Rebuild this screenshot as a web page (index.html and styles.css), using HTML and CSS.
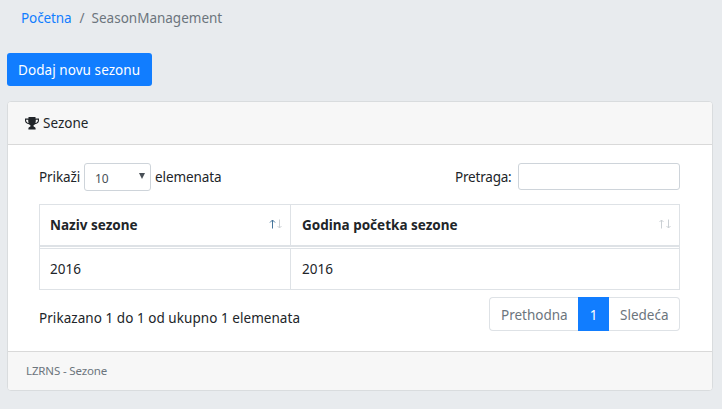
FILE: index.html
```html
<!DOCTYPE html>
<html lang="sr">
<head>
<meta charset="utf-8">
<title>Sezone</title>
<link rel="stylesheet" href="styles.css">
</head>
<body>
<nav class="breadcrumb"><a href="#">Početna</a><span class="slash">/</span><span class="here">SeasonManagement</span></nav>
<button class="add">Dodaj novu sezonu</button>
<section class="card">
  <header class="card-header">
    <svg class="trophy" viewBox="0 0 14 13"><path fill="currentColor" d="M3.500 0h7v1.600H14v2c0 2-1.700 3.500-4 3.700-.6.7-1.600.9-1.600 1.700 0 1 2.200.8 2.200 2.300V12.500H3.400v-1.200c0-1.500 2.200-1.300 2.200-2.300 0-.8-1-1-1.600-1.700C1.700 7.100 0 5.600 0 3.600v-2h3.500zM1.100 2.700v.9c0 1.200 1 2.200 2.500 2.500-.3-.8-.4-2-.4-3.400zM10.800 2.700c0 1.400-.1 2.600-.4 3.400 1.500-.3 2.500-1.300 2.500-2.500v-.9z"/></svg>
    <span>Sezone</span>
  </header>
  <div class="card-body">
    <div class="controls">
      <label class="length"><span class="show">Prikaži</span><span class="select"><span>10</span><i class="caret"></i></span><span class="items">elemenata</span></label>
      <label class="filter"><span>Pretraga:</span><input type="search"></label>
    </div>
    <div class="table">
      <div class="row head">
        <div class="cell"><span>Naziv sezone</span>
          <svg class="sort" viewBox="0 0 13 10"><path class="on" d="M3.500 9.500V1M1 3.500L3.500 1 6 3.500"/><path class="off" d="M10.500 .5V9M8.500 7l2 2 2-2"/></svg></div>
        <div class="cell"><span>Godina početka sezone</span>
          <svg class="sort" viewBox="0 0 13 10"><path class="off" d="M3.500 9.500V1M1.500 3L3.500 1l2 2M10.500 .5V9M8.500 7l2 2 2-2"/></svg></div>
      </div>
      <div class="row data"><div class="cell">2016</div><div class="cell">2016</div></div>
    </div>
    <div class="bottom">
      <span class="info">Prikazano 1 do 1 od ukupno 1 elemenata</span>
      <div class="pages"><span class="prev">Prethodna</span><span class="active">1</span><span class="next">Sledeća</span></div>
    </div>
  </div>
  <footer class="card-footer">LZRNS - Sezone</footer>
</section>
</body>
</html>
```
FILE: styles.css
```css
* { box-sizing: border-box; }
body {
  margin: 0;
  padding: 8px 9px 0 7px;
  height: 409px;
  overflow: hidden;
  background: #e8ebee;
  color: #212529;
  font: 13.5px/20px "Noto Sans", "Open Sans", sans-serif;
  white-space: nowrap;
}
.breadcrumb { display: flex; height: 45px; padding-left: 14px; color: #6c757d; }
.breadcrumb a { color: #117dff; text-decoration: none; letter-spacing: -.1px; }
.slash { margin: 0 7px 0 8px; }
.add {
  display: block;
  width: 145px;
  height: 33px;
  padding: 0 0 0 11px;
  border: 0;
  border-radius: 3px;
  background: #117dff;
  color: #fff;
  font: inherit;
  letter-spacing: .07px;
  text-align: left;
}
.card {
  margin-top: 15px;
  width: 706px;
  height: 290px;
  display: flex;
  flex-direction: column;
  border: 1px solid #d9dcde;
  border-radius: 4px;
  background: #fff;
  overflow: hidden;
}
.card-header {
  display: flex;
  align-items: center;
  gap: 4px;
  height: 43px;
  padding-left: 17px;
  background: #f7f7f7;
  border-bottom: 1px solid #d9d9d9;
}
.trophy { width: 14px; height: 13px; }
.card-body { flex: 1; padding: 18px 32px 0 31px; }
.controls { display: flex; justify-content: space-between; height: 41px; }
.length, .filter { display: flex; align-items: center; height: 28px; }
.show { width: 45px; letter-spacing: -.1px; }
.items { letter-spacing: -.08px; }
.select {
  display: flex;
  align-items: center;
  justify-content: space-between;
  width: 67px;
  height: 28px;
  margin-right: 4px;
  padding: 3px 5px 0 10px;
  border: 1px solid #ced4da;
  border-radius: 3px;
  color: #495057;
  font-size: 12px;
}
.caret {
  width: 6px;
  height: 6px;
  margin-top: -5px;
  background: #495057;
  clip-path: polygon(0 0, 100% 0, 50% 100%);
}
.filter { height: 27px; }
.filter span { width: 63px; letter-spacing: -.2px; }
.filter input {
  width: 162px;
  height: 27px;
  border: 1px solid #ced4da;
  border-radius: 3px;
  background: #fff;
}
.table { border: 1px solid #dee2e6; height: 86px; }
.row { display: grid; grid-template-columns: 250px 1fr; }
.cell { display: flex; align-items: center; justify-content: space-between; padding: 0 8px 0 10px; }
.cell + .cell { padding-left: 11px; border-left: 1px solid #dee2e6; }
.head { height: 42px; border-bottom: 2px solid #dee2e6; font-weight: 700; }
.data { height: 41px; margin-top: 1px; border-top: 1px solid #dee2e6; }
.sort { width: 13px; height: 10px; margin-top: -3px; fill: none; }
.on { stroke: #45749a; }
.off { stroke: #cbd0d4; }
.bottom { display: flex; justify-content: space-between; padding-top: 7px; }
.info { padding-top: 11px; letter-spacing: .05px; }
.pages { display: flex; width: 191px; height: 34px; line-height: 36px; color: #6c757d; }
.prev, .next { border: 1px solid #dee2e6; line-height: 34px; }
.prev { width: 89px; padding-left: 11px; border-right: 0; border-radius: 4px 0 0 4px; }
.next { flex: 1; padding-left: 11px; border-left: 0; border-radius: 0 4px 4px 0; }
.active { width: 31px; background: #117dff; color: #fff; text-align: center; }
.card-footer {
  height: 39px;
  padding-left: 18px;
  border-top: 1px solid #d9d9d9;
  background: #f7f7f7;
  color: #6c757d;
  font-size: 11.5px;
  letter-spacing: -.15px;
  line-height: 37px;
}
```
